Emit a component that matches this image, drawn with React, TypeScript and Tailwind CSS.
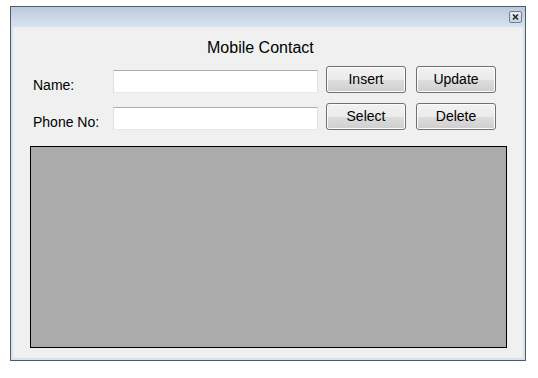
import React from "react";

function Btn({ label }: { label: string }) {
  return (
    <button className="w-[80px] h-[27px] pb-[1px] rounded-[3px] border border-[#707070] bg-[linear-gradient(#f2f2f2_0%,#ebebeb_50%,#dddddd_51%,#cfcfcf_100%)] text-[14px] text-black leading-none shadow-[inset_0_0_0_1px_#fcfcfc]">
      {label}
    </button>
  );
}

function TextBox() {
  return (
    <div className="mt-[4px] w-[205px] h-[23px] bg-white border border-[#e3e9ef] border-t-[#abadb3] border-l-[#dbdfe6] border-r-[#e2e3ea]" />
  );
}

export default function App() {
  return (
    <div className="w-[538px] h-[378px] bg-white pt-[6px] pl-[10px]" style={{ fontFamily: '"Liberation Sans", Arial, sans-serif' }}>
      <div className="w-[516px] h-[355px] border border-[#555a60] flex flex-col bg-[#d6e2f0]">
        <div className="h-[20px] flex items-start justify-end bg-[linear-gradient(#b9cadd,#d7e3f0)] pr-[3px] pt-[4px]">
          <div className="w-[13px] h-[12px] rounded-[2px] border border-[#6f7d90] bg-[linear-gradient(#e9eef5,#c9d4e2)] flex items-center justify-center">
            <svg width="7" height="6" viewBox="0 0 7 6">
              <path d="M1 0.5 L6 5.5 M6 0.5 L1 5.5" stroke="#2b2b2b" strokeWidth="1.6" />
            </svg>
          </div>
        </div>
        <div className="flex-1 mx-[2px] mb-[2px] bg-[#f0f0f0] flex flex-col">
          <div className="mt-[12px] pl-[194px] text-[16px] leading-[18px] text-black">Mobile Contact</div>
          <div className="mt-[9px] flex items-start">
            <div className="w-[100px] pl-[20px] mt-[11px] text-[14px] leading-[16px] text-black">Name:</div>
            <TextBox />
            <div className="ml-[8px] flex gap-[10px]">
              <Btn label="Insert" />
              <Btn label="Update" />
            </div>
          </div>
          <div className="mt-[10px] flex items-start">
            <div className="w-[100px] pl-[20px] mt-[11px] text-[14px] leading-[16px] text-black">Phone No:</div>
            <TextBox />
            <div className="ml-[8px] flex gap-[10px]">
              <Btn label="Select" />
              <Btn label="Delete" />
            </div>
          </div>
          <div className="mt-[16px] ml-[17px] w-[477px] h-[202px] bg-[#ababab] border border-black" />
        </div>
      </div>
    </div>
  );
}
